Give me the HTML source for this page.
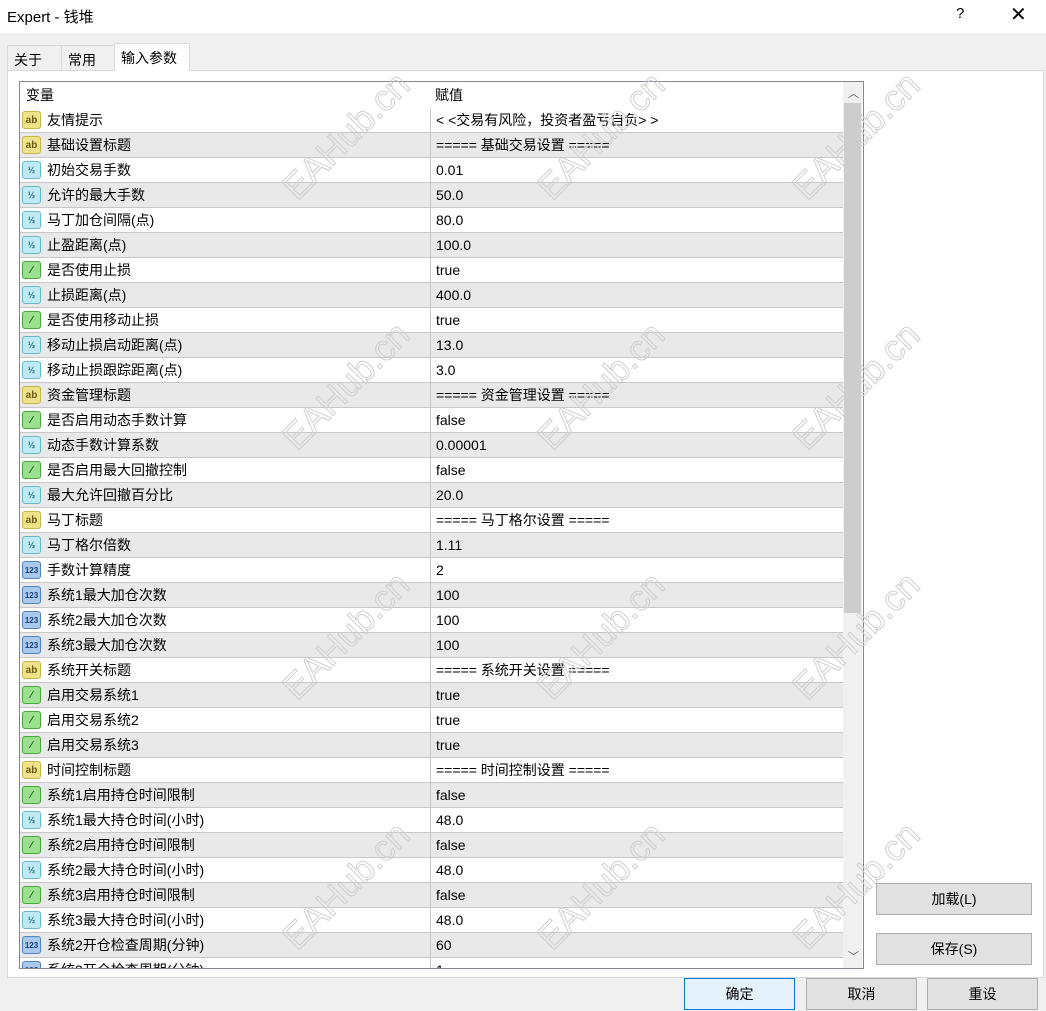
<!DOCTYPE html>
<html><head><meta charset="utf-8"><style>
*{margin:0;padding:0;box-sizing:border-box}
body{width:1046px;height:1011px;background:#f0f0f0;font-family:"Liberation Sans","Noto Sans CJK SC",sans-serif;font-size:14px;color:#000;position:relative;overflow:hidden}
.title{position:absolute;left:0;top:0;width:1046px;height:33px;background:#fff}
.title .t{position:absolute;left:7px;top:6px;font-size:15px}
.title .q{position:absolute;left:956px;top:5px;font-size:15px}
.title .x{position:absolute;left:1010px;top:2px;font-size:20px;font-weight:300}
.tab{position:absolute;top:45px;height:26px;border:1px solid #d9d9d9;border-bottom:none;background:#f0f0f0;padding:4px 6px;font-size:14px}
.panel{position:absolute;left:7px;top:70px;width:1037px;height:908px;background:#fff;border:1px solid #d9d9d9}
.grid{position:absolute;left:19px;top:81px;width:845px;height:888px;border:1px solid #828790;overflow:hidden;background:#fff}
.row{position:absolute;left:0;width:823px;height:25px;border-bottom:1px solid #c8c8c8;line-height:24px}
.row.g{background:#e9e9e9}
.row .n{position:absolute;left:27px;top:0;white-space:nowrap}
.row .v{position:absolute;left:410px;top:0;height:24px;border-left:1px solid #c8c8c8;padding-left:5px;white-space:nowrap}
.hd{position:absolute;left:0;top:0;width:823px;height:26px;line-height:26px}
.ic{position:absolute;left:2px;top:3px;width:19px;height:18px;border-radius:3px;font-size:10px;font-weight:bold;text-align:center;line-height:17px}
.ab{background:#f0e28a;border:1px solid #c9b44a;color:#6b5a10}
.hf{background:#bfeaf3;border:1px solid #65b9cc;color:#1b6f84;font-size:9px}
.bo{background:#9ae08e;border:1px solid #48a83d;color:#135a10}
.nm{background:#a9c8ec;border:1px solid #4f82c1;color:#163e78;font-size:8px}
.sb{position:absolute;left:823px;top:0;width:19px;height:886px;background:#f0f0f0}
.thumb{position:absolute;left:1px;top:21px;width:17px;height:510px;background:#cdcdcd}
.btn{position:absolute;height:32px;background:#e1e1e1;border:1px solid #adadad;text-align:center;line-height:30px;font-size:14px}
.wm{position:absolute;font-size:36px;color:transparent;-webkit-text-stroke:1px #cfcfcf;transform:rotate(-45deg);white-space:nowrap;font-family:"Liberation Sans",sans-serif}
</style></head><body>
<div class="title"><span class="t">Expert - 钱堆</span><span class="q">?</span><span class="x">✕</span></div>
<div class="tab" style="left:7px;width:55px">关于</div>
<div class="tab" style="left:61px;width:54px">常用</div>
<div class="panel"></div>
<div class="tab" style="left:114px;top:43px;height:28px;width:76px;background:#fff;z-index:2">输入参数</div>
<div class="grid">
<div class="hd"><span style="position:absolute;left:6px;top:0">变量</span><span style="position:absolute;left:415px;top:0">赋值</span></div>
<div id="rows"></div>
<div class="sb"><div style="position:absolute;left:5px;top:3px;font-size:11px;color:#555">︿</div><div class="thumb"></div><div style="position:absolute;left:5px;top:866px;font-size:11px;color:#555">﹀</div></div>
</div>
<div class="btn" style="left:876px;top:883px;width:156px">加载(L)</div>
<div class="btn" style="left:876px;top:933px;width:156px">保存(S)</div>
<div class="btn" style="left:684px;top:978px;width:111px;border:1px solid #0078d7;background:#e5f1fb">确定</div>
<div class="btn" style="left:806px;top:978px;width:111px">取消</div>
<div class="btn" style="left:927px;top:978px;width:111px">重设</div>
<script>
var d=[["ab","友情提示","< <交易有风险，投资者盈亏自负> >"],["ab","基础设置标题","===== 基础交易设置 ====="],["hf","初始交易手数","0.01"],["hf","允许的最大手数","50.0"],["hf","马丁加仓间隔(点)","80.0"],["hf","止盈距离(点)","100.0"],["bo","是否使用止损","true"],["hf","止损距离(点)","400.0"],["bo","是否使用移动止损","true"],["hf","移动止损启动距离(点)","13.0"],["hf","移动止损跟踪距离(点)","3.0"],["ab","资金管理标题","===== 资金管理设置 ====="],["bo","是否启用动态手数计算","false"],["hf","动态手数计算系数","0.00001"],["bo","是否启用最大回撤控制","false"],["hf","最大允许回撤百分比","20.0"],["ab","马丁标题","===== 马丁格尔设置 ====="],["hf","马丁格尔倍数","1.11"],["nm","手数计算精度","2"],["nm","系统1最大加仓次数","100"],["nm","系统2最大加仓次数","100"],["nm","系统3最大加仓次数","100"],["ab","系统开关标题","===== 系统开关设置 ====="],["bo","启用交易系统1","true"],["bo","启用交易系统2","true"],["bo","启用交易系统3","true"],["ab","时间控制标题","===== 时间控制设置 ====="],["bo","系统1启用持仓时间限制","false"],["hf","系统1最大持仓时间(小时)","48.0"],["bo","系统2启用持仓时间限制","false"],["hf","系统2最大持仓时间(小时)","48.0"],["bo","系统3启用持仓时间限制","false"],["hf","系统3最大持仓时间(小时)","48.0"],["nm","系统2开仓检查周期(分钟)","60"],["nm","系统3开仓检查周期(分钟)","1"]];
var lab={ab:"ab",hf:"½",bo:"⁄",nm:"123"};var h="";
d.forEach(function(r,i){var t=26+i*25;h+='<div class="row'+(i%2?' g':'')+'" style="top:'+t+'px"><div class="ic '+r[0]+'">'+lab[r[0]]+'</div><span class="n">'+r[1]+'</span><span class="v">'+r[2].replace(/</g,"&lt;").replace(/>/g,"&gt;")+'</span></div>';});
document.getElementById("rows").innerHTML=h;
var w="";[[265,115],[520,115],[775,115],[265,365],[520,365],[775,365],[265,615],[520,615],[775,615],[265,865],[520,865],[775,865]].forEach(function(p){w+='<div class="wm" style="left:'+p[0]+'px;top:'+p[1]+'px">EAHub.cn</div>';});
document.body.insertAdjacentHTML("beforeend",w);
</script>
</body></html>
